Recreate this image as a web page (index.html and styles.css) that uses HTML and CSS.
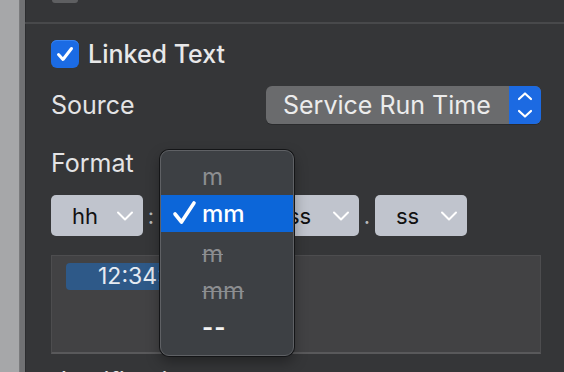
FILE: index.html
```html
<!DOCTYPE html>
<html lang="en">
<head>
    <meta charset="UTF-8">
    <title>Linked Text Inspector</title>
    <link rel="stylesheet" href="styles.css">
</head>
<body>
    <div class="window">
        <div class="sidebar"></div>
        <div class="panel">
            <div class="top-stub"></div>
            <div class="separator"></div>

            <div class="row linked">
                <span class="checkbox">
                    <svg width="28" height="28" viewBox="0 0 28 28"><path d="M7.5 14.5l4.5 5 8.5-11" fill="none" stroke="#fff" stroke-width="3" stroke-linecap="round" stroke-linejoin="round"/></svg>
                </span>
                <span class="linked-label">Linked Text</span>
            </div>

            <div class="row source">
                <span class="label">Source</span>
                <div class="popup">
                    <span class="popup-text">Service Run Time</span>
                    <span class="stepper">
                        <svg width="32" height="38" viewBox="0 0 32 38"><path d="M10 13l6-5.5 6 5.5M10 25l6 5.5 6-5.5" fill="none" stroke="#fff" stroke-width="2.2" stroke-linecap="round" stroke-linejoin="round"/></svg>
                    </span>
                </div>
            </div>

            <div class="label format-label">Format</div>

            <div class="format-row">
                <div class="mini-popup"><span>hh</span><svg class="chev" width="18" height="12" viewBox="0 0 18 12"><path d="M2 2.5l7 7 7-7" fill="none" stroke="#fff" stroke-width="2" stroke-linecap="round" stroke-linejoin="round"/></svg></div>
                <span class="sep-char">:</span>
                <div class="mini-popup"><span>mm</span><svg class="chev" width="18" height="12" viewBox="0 0 18 12"><path d="M2 2.5l7 7 7-7" fill="none" stroke="#fff" stroke-width="2" stroke-linecap="round" stroke-linejoin="round"/></svg></div>
                <span class="sep-char">:</span>
                <div class="mini-popup"><span>ss</span><svg class="chev" width="18" height="12" viewBox="0 0 18 12"><path d="M2 2.5l7 7 7-7" fill="none" stroke="#fff" stroke-width="2" stroke-linecap="round" stroke-linejoin="round"/></svg></div>
                <span class="sep-char">.</span>
                <div class="mini-popup"><span>ss</span><svg class="chev" width="18" height="12" viewBox="0 0 18 12"><path d="M2 2.5l7 7 7-7" fill="none" stroke="#fff" stroke-width="2" stroke-linecap="round" stroke-linejoin="round"/></svg></div>
            </div>

            <div class="preview">
                <span class="token">12:34:56.78</span>
            </div>

            <div class="label next-label">Justification</div>
        </div>

        <div class="menu">
            <div class="menu-item dim">m</div>
            <div class="menu-item selected">
                <svg class="check" width="26" height="28" viewBox="0 0 26 28"><path d="M3 15l6.5 8L22 4" fill="none" stroke="#fff" stroke-width="3.6" stroke-linecap="round" stroke-linejoin="round"/></svg>
                mm
            </div>
            <div class="menu-item dim struck first-struck">m</div>
            <div class="menu-item dim struck">mm</div>
            <div class="menu-item dashes">--</div>
        </div>
    </div>
</body>
</html>
```

FILE: styles.css
```css
body {
    margin: 0;
    background-color: #353638;
    font-family: Inter, "Noto Sans", sans-serif;
    color: #e6e6e7;
}
.window {
    position: relative;
    width: 564px;
    height: 372px;
    display: flex;
    overflow: hidden;
}
.sidebar {
    width: 19px;
    flex: none;
    background-color: #a6a7a9;
    border-right: 1px solid #7a7b7d;
    box-shadow: 5px 0 0 #707173;
    margin-right: 5px;
}
.panel {
    flex: 1;
    border-left: 1px solid #2c2d2f;
    padding-left: 25px;
    padding-right: 23px;
}
.top-stub {
    width: 26px;
    height: 3px;
    margin-left: 1px;
    background-color: #5e5f61;
    border-radius: 0 0 5px 5px;
}
.separator {
    height: 2px;
    background-color: #48494b;
    margin: 19px -23px 0 -26px;
}
.row {
    display: flex;
    align-items: center;
}
.linked {
    margin-top: 16px;
    height: 28px;
}
.checkbox {
    width: 28px;
    height: 28px;
    border-radius: 6px;
    background-color: #1b6be4;
    box-shadow: inset 0 1px 0 #3a84f0;
}
.checkbox svg {
    display: block;
}
.linked-label {
    margin-left: 9px;
    font-size: 25px;
    font-weight: 500;
    color: #e8e8e9;
}
.label {
    font-size: 25px;
    color: #e4e4e5;
}
.source {
    margin-top: 18px;
    justify-content: space-between;
}
.popup {
    display: flex;
    width: 275px;
    height: 38px;
    border-radius: 6px;
    background-color: #6a6b6d;
    overflow: hidden;
    box-shadow: 0 1px 0 #2a2b2d;
}
.popup-text {
    flex: 1;
    padding-left: 17px;
    font-size: 25px;
    line-height: 38px;
    color: #ececec;
}
.stepper {
    width: 32px;
    background-color: #1c6ae2;
}
.stepper svg {
    display: block;
}
.format-label {
    margin-top: 24px;
}
.format-row {
    display: flex;
    align-items: center;
    margin-top: 17px;
    height: 41px;
}
.mini-popup {
    width: 92px;
    height: 41px;
    box-sizing: border-box;
    display: flex;
    align-items: center;
    justify-content: space-between;
    padding: 0 9px 0 21px;
    border-radius: 5px;
    background-color: #c0c4cd;
    color: #111;
    font-size: 22px;
}
.chev {
    display: block;
}
.sep-char {
    width: 16px;
    text-align: center;
    font-size: 22px;
    color: #b8b9bb;
}
.preview {
    box-sizing: border-box;
    margin-top: 19px;
    height: 99px;
    border: 1px solid #4d4d4f;
    border-bottom: 2px solid #59595b;
    background-color: #424244;
    padding: 7px 14px;
}
.token {
    display: inline-block;
    padding: 0 32px;
    height: 27px;
    line-height: 27px;
    border-radius: 4px;
    background-color: #2e5988;
    color: #e6ebf2;
    font-size: 23px;
}
.next-label {
    margin-top: 12px;
    margin-left: 2px;
}
.menu {
    position: absolute;
    left: 160px;
    top: 150px;
    width: 134px;
    height: 206px;
    padding-top: 7px;
    box-sizing: border-box;
    border: 1px solid #5f6165;
    border-radius: 9px;
    background-color: #3d4044;
    box-shadow: 0 0 0 1px #141517, 0 6px 14px rgba(0, 0, 0, 0.35);
}
.menu-item {
    height: 37px;
    line-height: 37px;
    padding-left: 41px;
    font-size: 24px;
    color: #f2f2f2;
    position: relative;
}
.menu-item.dim {
    color: #8c8e91;
}
.menu-item.struck {
    text-decoration: line-through;
    text-decoration-thickness: 1px;
}
.menu-item.first-struck {
    margin-top: 3px;
}
.menu-item.dashes {
    font-weight: 700;
    letter-spacing: 1px;
}
.menu-item.selected {
    background-color: #0c66d9;
    color: #fff;
    font-weight: 500;
}
.check {
    position: absolute;
    left: 11px;
    top: 4px;
}
```
